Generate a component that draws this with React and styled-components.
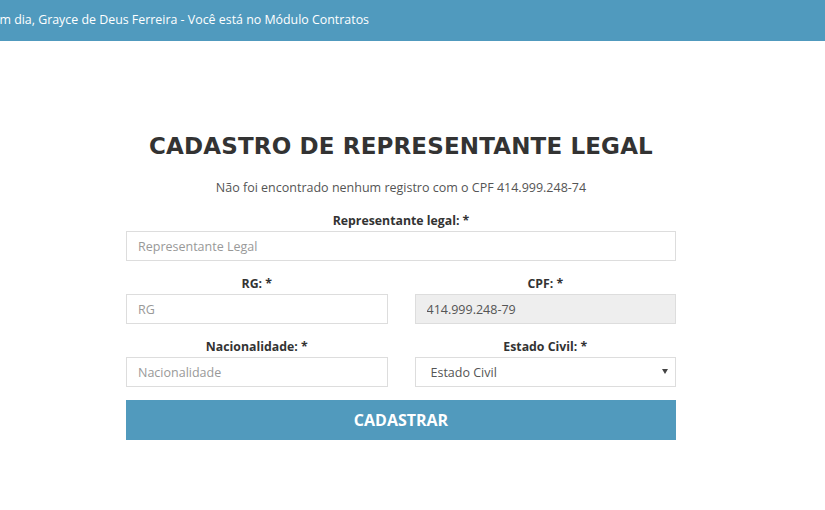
import React from 'react';
import styled, { createGlobalStyle } from 'styled-components';

const GlobalStyle = createGlobalStyle`
  html, body {
    margin: 0;
    padding: 0;
    background: #fff;
    font-family: 'Open Sans', 'Liberation Sans', sans-serif;
    overflow: hidden;
  }
  * { box-sizing: border-box; }
`;

const TopBar = styled.header`
  height: 41px;
  background-color: #509abe;
  display: flex;
  align-items: center;
  overflow: hidden;
`;

const Greeting = styled.p`
  margin: 0 0 3px -16px;
  color: #fff;
  font-size: 12.4px;
  white-space: nowrap;
`;

const Page = styled.div`
  padding-right: 23px;
`;

const Main = styled.main`
  width: 550px;
  margin: 0 auto;
  padding-top: 92px;
  display: flex;
  flex-direction: column;
  align-items: stretch;
`;

const Title = styled.h1`
  margin: 0;
  text-align: center;
  font-family: 'DejaVu Sans', sans-serif;
  font-weight: bold;
  font-size: 23px;
  color: #333;
  letter-spacing: 0.15px;
`;

const Notice = styled.p`
  margin: 20px 0 0;
  text-align: center;
  font-size: 12.5px;
  color: #555;
`;

const Form = styled.form`
  margin-top: 16px;
  display: grid;
  grid-template-columns: 1fr 1fr;
  column-gap: 27px;
  row-gap: 14px;
`;

const Field = styled.div`
  grid-column: ${({ $wide }) => ($wide ? '1 / -1' : 'auto')};
  display: flex;
  flex-direction: column;
`;

const Label = styled.label`
  text-align: center;
  font-weight: bold;
  font-size: 12.3px;
  color: #333;
  line-height: 17px;
  margin-bottom: 2px;
`;

const Input = styled.input`
  height: 30px;
  border: 1px solid #ddd;
  border-radius: 0;
  padding: 0 11px;
  font-family: 'Open Sans', sans-serif;
  font-size: 12.5px;
  color: #555;
  background: ${({ disabled }) => (disabled ? '#eee' : '#fff')};
  outline: none;
  &::placeholder { color: #999; }
`;

const SelectBox = styled.div`
  position: relative;
  height: 30px;
  border: 1px solid #ddd;
  display: flex;
  align-items: center;
  padding: 0 15px;
  font-size: 12.5px;
  color: #555;
`;

const Caret = styled.span`
  position: absolute;
  right: 7px;
  top: 11px;
  width: 0;
  height: 0;
  border-left: 3px solid transparent;
  border-right: 3px solid transparent;
  border-top: 5px solid #444;
`;

const Submit = styled.button`
  grid-column: 1 / -1;
  margin-top: -1px;
  height: 40px;
  border: none;
  background-color: #519abd;
  color: #fff;
  font-family: 'Open Sans', sans-serif;
  font-weight: bold;
  font-size: 16px;
`;

export default function App() {
  return (
    <>
      <GlobalStyle />
      <TopBar>
        <Greeting>Bom dia, Grayce de Deus Ferreira - Você está no Módulo Contratos</Greeting>
      </TopBar>
      <Page>
        <Main>
          <Title>CADASTRO DE REPRESENTANTE LEGAL</Title>
          <Notice>Não foi encontrado nenhum registro com o CPF 414.999.248-74</Notice>
          <Form onSubmit={e => e.preventDefault()}>
            <Field $wide>
              <Label>Representante legal: *</Label>
              <Input placeholder="Representante Legal" />
            </Field>
            <Field>
              <Label>RG: *</Label>
              <Input placeholder="RG" />
            </Field>
            <Field>
              <Label>CPF: *</Label>
              <Input value="414.999.248-79" disabled readOnly />
            </Field>
            <Field>
              <Label>Nacionalidade: *</Label>
              <Input placeholder="Nacionalidade" />
            </Field>
            <Field>
              <Label>Estado Civil: *</Label>
              <SelectBox>
                Estado Civil
                <Caret />
              </SelectBox>
            </Field>
            <Submit type="submit">CADASTRAR</Submit>
          </Form>
        </Main>
      </Page>
    </>
  );
}
